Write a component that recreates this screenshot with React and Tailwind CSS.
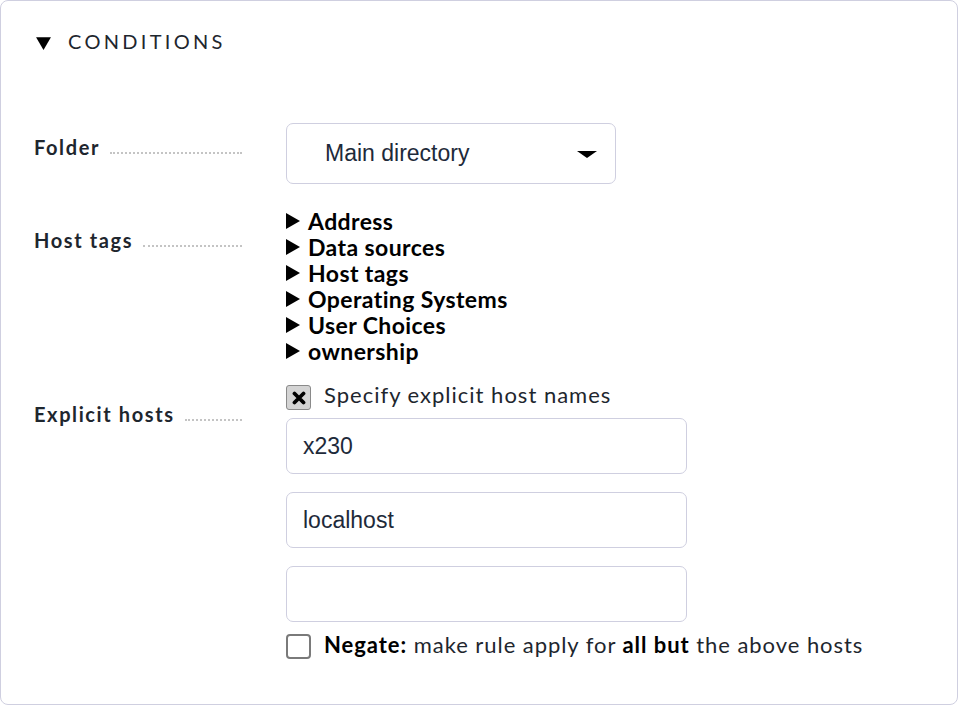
import React from 'react';

const tagGroups = ['Address', 'Data sources', 'Host tags', 'Operating Systems', 'User Choices', 'ownership'];
const hosts = ['x230', 'localhost', ''];

function Label({ text, className = '' }) {
  return (
    <div className={`w-[285px] shrink-0 pl-[33px] flex items-start ${className}`}>
      <div className="flex-1 flex items-end">
        <span className="text-[20px] font-bold tracking-[1.6px] text-[#1e262e] whitespace-nowrap leading-none">{text}</span>
        <span className="flex-1 ml-[10px] mr-[44px] mb-[3px] border-b-2 border-dotted border-[#c4c4c4]" />
      </div>
    </div>
  );
}

function Triangle({ down = false, className = '' }) {
  return (
    <svg viewBox="0 0 14 16" className={className}>
      {down ? <path d="M0 3 H14 L7 15 Z" fill="#000" /> : <path d="M0 0 V16 L14 8 Z" fill="#000" />}
    </svg>
  );
}

export default function App() {
  return (
    <div className="w-[958px] h-[705px] bg-white font-['Lato','Noto_Sans',sans-serif]">
      <div className="h-full border border-[#cfcfe0] rounded-[8px] pt-[30px]">
        {/* Header */}
        <div className="flex items-center pl-[35px] h-[20px]">
          <Triangle down className="w-[15px] h-[17px] mt-[3px]" />
          <span className="ml-[17px] text-[20px] tracking-[3.3px] text-[#1e262e] leading-none">CONDITIONS</span>
        </div>

        {/* Folder */}
        <div className="flex mt-[72px]">
          <Label text="Folder" className="pt-[14px]" />
          <div className="w-[330px] h-[61px] border border-[#cfcfe0] rounded-[7px] flex items-center justify-between pl-[38px] pr-[18px] font-['Liberation_Sans',Arial,sans-serif] text-[23px] text-[#1e2a3a]">
            <span>Main directory</span>
            <svg viewBox="0 0 20 7" className="w-[20px] h-[7px] mt-[1px]">
              <path d="M0 0 H20 L10 7 Z" fill="#000" />
            </svg>
          </div>
        </div>

        {/* Host tags */}
        <div className="flex mt-[24px]">
          <Label text="Host tags" className="pt-[22px]" />
          <div className="flex flex-col">
            {tagGroups.map((t) => (
              <div key={t} className="flex items-center h-[26px]">
                <Triangle className="w-[14px] h-[16px]" />
                <span className="ml-[8px] text-[23px] font-bold tracking-[0.4px] text-black leading-[26px]">{t}</span>
              </div>
            ))}
          </div>
        </div>

        {/* Explicit hosts */}
        <div className="flex mt-[21px]">
          <Label text="Explicit hosts" className="pt-[19px]" />
          <div className="flex flex-col">
            <div className="flex items-center h-[25px]">
              <div className="w-[25px] h-[25px] rounded-[3px] border border-[#8a8a8a] bg-[#d4d4d4] flex items-center justify-center">
                <svg viewBox="0 0 14 14" className="w-[14px] h-[14px]">
                  <path d="M2.5 2.5 L11.5 11.5 M11.5 2.5 L2.5 11.5" stroke="#000" strokeWidth="3.8" strokeLinecap="round" />
                </svg>
              </div>
              <span className="ml-[13px] text-[22px] tracking-[1px] text-[#1e262e] leading-none -mt-[5px]">Specify explicit host names</span>
            </div>
            <div className="flex flex-col gap-[18px] mt-[8px]">
              {hosts.map((h, i) => (
                <div key={i} className="w-[401px] h-[56px] border border-[#cfcfe0] rounded-[7px] flex items-center pl-[16px] font-['Liberation_Sans',Arial,sans-serif] text-[23px] text-[#1e2a3a]">
                  {h}
                </div>
              ))}
            </div>
            <div className="flex items-center mt-[12px]">
              <div className="w-[25px] h-[25px] rounded-[4px] border-2 border-[#7a7a7a] bg-white" />
              <span className="ml-[13px] text-[22px] tracking-[0.95px] text-[#1e262e] leading-none -mt-[4px]">
                <b className="font-bold text-black">Negate:</b> make rule apply for <b className="font-bold text-black">all but</b> the above hosts
              </span>
            </div>
          </div>
        </div>
      </div>
    </div>
  );
}
